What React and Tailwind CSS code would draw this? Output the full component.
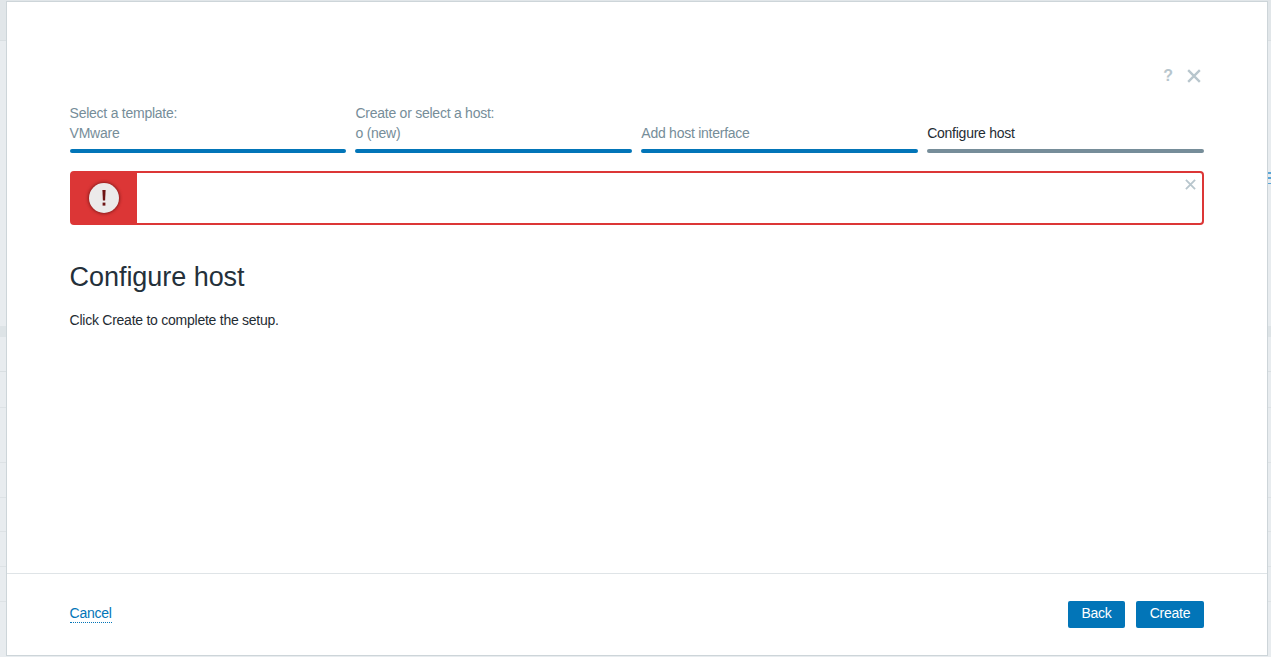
const font = { fontFamily: '"Liberation Sans", Arial, sans-serif' };

function Step({ top, bottom, active }) {
  return (
    <div className="flex-1 min-w-0 flex flex-col">
      <div className={`h-[20px] text-[14px] leading-[20px] tracking-[-0.25px] ${active ? "text-[#1f2c33]" : "text-[#768d99]"}`}>{top || "\u00a0"}</div>
      <div className={`h-[20px] text-[14px] leading-[20px] tracking-[-0.25px] ${active ? "text-[#1f2c33]" : "text-[#768d99]"}`}>{bottom}</div>
      <div className={`mt-[6px] h-[4px] rounded-[2px] ${active ? "bg-[#768d99]" : "bg-[#0275b8]"}`} />
    </div>
  );
}

function Cross({ size, stroke, className }) {
  return (
    <svg width={size} height={size} viewBox="0 0 12 12" className={className} fill="none" stroke="#b8c6cd" strokeWidth={stroke}>
      <path d="M1 1L11 11M11 1L1 11" />
    </svg>
  );
}

export default function App() {
  return (
    <div className="relative h-[657px] w-[1271px] overflow-hidden bg-[#e8ecef]" style={font}>
      <div className="flex flex-col">
        <div className="h-[41px] border-b border-[#d9dfe2] bg-[#e1e6e9]" />
        <div className="h-[285px]" />
        <div className="h-[11px] bg-[#dde3e6]" />
        <div className="h-[35px] border-b border-[#d9dfe2]" />
        <div className="h-[36px] border-b border-[#dde2e5]" />
        <div className="h-[55px] border-b border-[#dde2e5]" />
        <div className="h-[35px] border-b border-[#dde2e5]" />
        <div className="h-[34px] border-b border-[#dde2e5]" />
        <div className="h-[35px] border-b border-[#dde2e5]" />
        <div className="h-[35px] border-b border-[#dde2e5]" />
      </div>

      <div className="absolute right-0 top-[172px] flex w-[3px] flex-col gap-[3px]">
        <div className="h-[2px] bg-[#5aa5d6]" />
        <div className="h-[2px] bg-[#5aa5d6]" />
        <div className="mt-[1px] h-[1px] bg-[#5aa5d6]" />
      </div>

      <div className="absolute left-[6px] top-[1px] flex h-[655px] w-[1262px] flex-col border border-[#cdd5d9] bg-white">
        <div className="flex-1 pl-[62.6px] pr-[63px] pt-[61px]">
          <div className="flex h-[23px] justify-end gap-[14px] pr-[3px]">
            <span className="text-[16px] font-bold leading-[26px] text-[#b8c6cd]">?</span>
            <Cross size={14} stroke={2} className="mt-[6px]" />
          </div>
          <div className="mt-[17px] flex gap-[9px]">
            <Step top="Select a template:" bottom="VMware" />
            <Step top="Create or select a host:" bottom="o (new)" />
            <Step bottom="Add host interface" />
            <Step bottom="Configure host" active />
          </div>
          <div className="relative mt-[18px] flex h-[54px] rounded-[4px] border-2 border-[#dc3636] bg-white">
            <div className="flex w-[65px] items-center justify-center bg-[#dc3636]">
              <div className="flex h-[30px] w-[30px] items-center justify-center rounded-full bg-[#eceaea] shadow-[0_0_3px_1px_rgba(110,20,20,0.7)]">
                <svg width="4" height="18" viewBox="0 0 4 18" fill="#6e1414">
                  <path d="M0.4 1H3.6L3.1 11.5H0.9Z" />
                  <rect x="0.6" y="13.6" width="2.8" height="3" />
                </svg>
              </div>
            </div>
            <button className="absolute right-[6px] top-[6px] flex">
              <Cross size={11} stroke={2} />
            </button>
          </div>
          <h1 className="mt-[32px] text-[27px] font-normal leading-[40px] tracking-[-0.05px] text-[#24303a]">Configure host</h1>
          <p className="mt-[13px] text-[14px] leading-[20px] tracking-[-0.25px] text-[#1f2c33]">Click Create to complete the setup.</p>
        </div>
        <div className="flex h-[82px] items-start justify-between border-t border-[#dfe4e7] pl-[62.6px] pr-[63px] pt-[27px]">
          <a className="mt-[3px] border-b border-dotted border-[#0275b8] text-[14px] leading-[18px] tracking-[-0.25px] text-[#0275b8]">Cancel</a>
          <div className="flex gap-[11px]">
            <button className="h-[27px] w-[57px] rounded-[2px] bg-[#0275b8] pb-[2px] text-[14px] tracking-[-0.25px] text-white">Back</button>
            <button className="h-[27px] w-[68px] rounded-[2px] bg-[#0275b8] pb-[2px] text-[14px] tracking-[-0.25px] text-white">Create</button>
          </div>
        </div>
      </div>
    </div>
  );
}
